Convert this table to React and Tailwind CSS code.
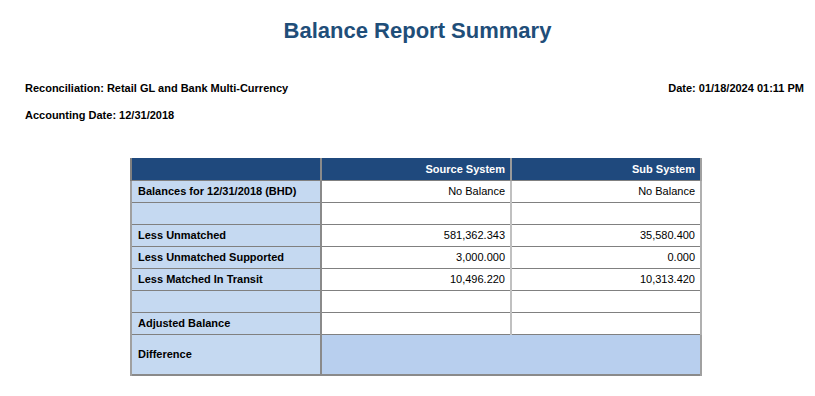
import React from 'react';

// Summary rows of the balance report
const rows = [
  { label: 'Balances for 12/31/2018 (BHD)', source: 'No Balance', sub: 'No Balance' },
  { label: '', source: '', sub: '' },
  { label: 'Less Unmatched', source: '581,362.343', sub: '35,580.400' },
  { label: 'Less Unmatched Supported', source: '3,000.000', sub: '0.000' },
  { label: 'Less Matched In Transit', source: '10,496.220', sub: '10,313.420' },
  { label: '', source: '', sub: '' },
  { label: 'Adjusted Balance', source: '', sub: '' },
];

const App = () => {
  return (
    <div className="w-[815px] h-[396px] bg-white font-['Liberation_Sans',Arial,sans-serif] text-black overflow-hidden">
      <h1 className="pt-[17px] pl-[20px] text-center text-[22px] leading-[27px] font-bold text-[#1f4e79]">Balance Report Summary</h1>

      <div className="mt-[37px] px-[25px] flex justify-between text-[11px] font-bold leading-[14px]">
        <span>Reconciliation: Retail GL and Bank Multi-Currency</span>
        <span className="mr-[-14px]">Date: 01/18/2024 01:11 PM</span>
      </div>
      <div className="mt-[13px] px-[25px] text-[11px] font-bold leading-[14px]">Accounting Date: 12/31/2018</div>

      <div className="mt-[36px] ml-[130px] w-[570px]">
        <table className="w-full border-collapse text-[11px] font-bold leading-[14px] table-fixed">
          <colgroup>
            <col className="w-[190px]" />
            <col className="w-[190px]" />
            <col className="w-[190px]" />
          </colgroup>
          <thead>
            <tr className="h-[22px] bg-[#1f497d] text-white">
              <th className="border-l-2 border-[#808080] border-r-2 border-r-[#8a8a8a]"></th>
              <th className="text-right pr-[5px] border-r-2 border-r-[#9a9a9a]">Source System</th>
              <th className="text-right pr-[5px] border-r-2 border-r-[#a0a0a0]">Sub System</th>
            </tr>
          </thead>
          <tbody>
            {rows.map((r, i) => (
              <tr key={i} className="h-[22px] border-t border-[#808080]">
                <td className="bg-[#c5d9f1] pl-[6px] border-l-2 border-l-[#a0a0a0] border-r-2 border-r-[#8a8a8a]">{r.label}</td>
                <td className="bg-white text-right pr-[5px] font-normal border-r-2 border-r-[#c0c0c0]">{r.source}</td>
                <td className="bg-white text-right pr-[5px] font-normal border-r-2 border-r-[#b0b0b0]">{r.sub}</td>
              </tr>
            ))}
            <tr className="h-[41px] border-t border-[#808080] border-b-2 border-b-[#8a8a8a]">
              <td className="bg-[#c5d9f1] pl-[6px] border-l-2 border-l-[#a0a0a0] border-r-2 border-r-[#8a8a8a]">Difference</td>
              <td colSpan={2} className="bg-[#b8cfee] border-r-2 border-r-[#a0a0a0]"></td>
            </tr>
          </tbody>
        </table>
      </div>
    </div>
  );
};

export default App;
